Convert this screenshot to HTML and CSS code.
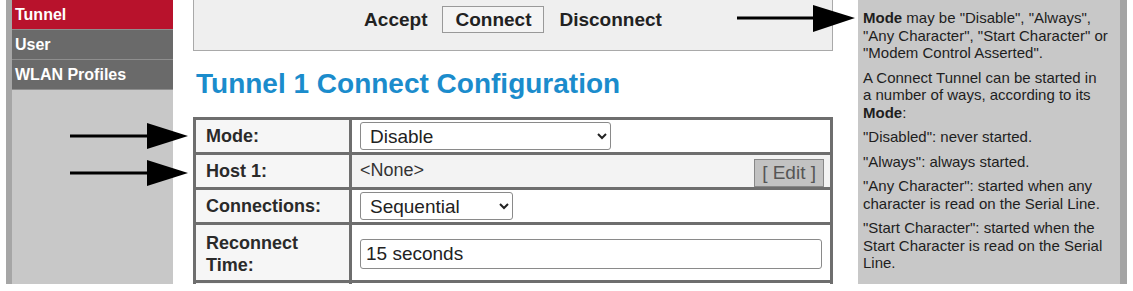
FILE: index.html
```html
<!DOCTYPE html>
<html lang="en">
<head>
  <meta charset="UTF-8">
  <title>Tunnel 1 Connect Configuration</title>
  <link rel="stylesheet" href="styles.css">
</head>
<body>
  <div class="page">
    <!-- Left menu -->
    <nav class="sidebar">
      <a class="menu-item active" href="#">Tunnel</a>
      <a class="menu-item" href="#">User</a>
      <a class="menu-item" href="#">WLAN Profiles</a>
    </nav>

    <!-- Main content -->
    <main class="main">
      <div class="actions">
        <span class="action">Accept</span>
        <span class="action current">Connect</span>
        <span class="action">Disconnect</span>
      </div>

      <h1 class="title">Tunnel 1 Connect Configuration</h1>

      <table class="config">
        <tr>
          <td class="label">Mode:</td>
          <td class="value">
            <select class="mode-select">
              <option>Disable</option>
              <option>Always</option>
              <option>Any Character</option>
              <option>Start Character</option>
              <option>Modem Control Asserted</option>
            </select>
          </td>
        </tr>
        <tr class="host-row">
          <td class="label">Host 1:</td>
          <td class="value">
            <div class="host">
              <span class="host-name">&lt;None&gt;</span>
              <button class="edit-btn" type="button">[ Edit ]</button>
            </div>
          </td>
        </tr>
        <tr>
          <td class="label">Connections:</td>
          <td class="value">
            <select class="conn-select">
              <option>Sequential</option>
              <option>Simultaneous</option>
            </select>
          </td>
        </tr>
        <tr class="tall-row">
          <td class="label">Reconnect<br>Time:</td>
          <td class="value">
            <input class="text-input" type="text" value="15 seconds">
          </td>
        </tr>
        <tr>
          <td class="label">&nbsp;</td>
          <td class="value">&nbsp;</td>
        </tr>
      </table>
    </main>

    <!-- Help panel -->
    <aside class="help">
      <p><b>Mode</b> may be "Disable", "Always", "Any Character", "Start Character" or "Modem Control Asserted".</p>
      <p>A Connect Tunnel can be started in<br>a number of ways, according to its <b>Mode</b>:</p>
      <p>"Disabled": never started.</p>
      <p>"Always": always started.</p>
      <p>"Any Character": started when any character is read on the Serial Line.</p>
      <p>"Start Character": started when the Start Character is read on the Serial Line.</p>
    </aside>

    <!-- Callout arrows over the screenshot -->
    <svg class="arrow arrow-top" width="120" height="32" viewBox="0 0 120 32">
      <line x1="0" y1="15" x2="78" y2="15" stroke="#000" stroke-width="3"/>
      <polygon points="76,2 118,15 76,29" fill="#000"/>
    </svg>
    <svg class="arrow arrow-mode" width="120" height="28" viewBox="0 0 120 28">
      <line x1="0" y1="13" x2="80" y2="13" stroke="#000" stroke-width="3"/>
      <polygon points="77,0 118,13 77,26" fill="#000"/>
    </svg>
    <svg class="arrow arrow-host" width="120" height="28" viewBox="0 0 120 28">
      <line x1="0" y1="13" x2="80" y2="13" stroke="#000" stroke-width="3"/>
      <polygon points="77,0 118,13 77,26" fill="#000"/>
    </svg>
  </div>
</body>
</html>
```

FILE: styles.css
```css
/* General Styles */
body {
  margin: 0;
  padding: 0;
  background: #fff;
  font-family: "Liberation Sans", Arial, sans-serif;
  color: #222;
}

.page {
  position: relative;
  display: flex;
  align-items: flex-start;
  height: 284px;
  overflow: hidden;
  padding-left: 6px;
}

/* Left menu */
.sidebar {
  width: 161px;
  height: 284px;
  background: #c8c8c8;
  border-left: 6px solid #a6a6a6;
  display: flex;
  flex-direction: column;
  flex-shrink: 0;
}

.menu-item {
  display: block;
  height: 29px;
  line-height: 29px;
  padding-left: 3px;
  background: #6a6a6a;
  color: #fff;
  font-weight: bold;
  font-size: 16px;
  text-decoration: none;
  border-bottom: 1px solid #8e8e8e;
}

.menu-item.active {
  background: #b8122c;
}

/* Main column */
.main {
  width: 640px;
  margin-left: 20px;
  flex-shrink: 0;
}

.actions {
  height: 51px;
  background: #efefef;
  border: 1px solid #a9a9a9;
  border-top: none;
  display: flex;
  justify-content: center;
  align-items: flex-start;
  gap: 15px;
  padding-top: 6px;
  box-sizing: border-box;
}

.action {
  font-weight: bold;
  font-size: 19px;
  color: #222;
  line-height: 27px;
}

.action.current {
  border: 1px solid #999;
  background: #f4f4f4;
  padding: 0 12px;
  line-height: 25px;
}

.title {
  margin: 17px 0 17px 3px;
  font-size: 28px;
  line-height: 32px;
  color: #1b8ccc;
  font-weight: bold;
}

/* Config table */
.config {
  width: 640px;
  border-collapse: collapse;
  border: 3px solid #6e6e6e;
}

.config td {
  border: 3px solid #6e6e6e;
  padding: 0 8px;
  height: 32px;
}

.label {
  width: 136px;
  font-size: 18px;
  font-weight: bold;
  background: #f6f6f6;
  color: #2a2a2a;
  line-height: 22px;
  padding-left: 10px !important;
}

.value {
  background: #fff;
  font-size: 19px;
}

.host-row .value {
  background: #f3f3f3;
  padding-right: 6px;
}

.tall-row td {
  height: 53px;
  padding-top: 2px;
}

select,
.text-input {
  font-family: "Liberation Sans", Arial, sans-serif;
  font-size: 19px;
  color: #222;
  border: 1px solid #8a8a8a;
  border-radius: 3px;
  background: #fff;
  box-sizing: border-box;
  height: 28px;
  padding: 0 5px;
}

.mode-select {
  width: 251px;
}

.conn-select {
  width: 153px;
}

.text-input {
  width: 462px;
  height: 30px;
}

.host {
  display: flex;
  justify-content: space-between;
  align-items: center;
}

.host-name {
  font-size: 18px;
  color: #333;
  margin-top: -2px;
}

.edit-btn {
  font-family: "Liberation Sans", Arial, sans-serif;
  font-size: 19px;
  color: #555;
  background: #c2c2c2;
  border: 1px solid #888;
  height: 28px;
  padding: 0 7px;
  margin-top: 4px;
}

/* Help panel */
.help {
  width: 257px;
  height: 284px;
  margin-left: 25px;
  background: #c8c8c8;
  border-right: 7px solid #a4a4a4;
  padding: 9px 0 0 5px;
  box-sizing: content-box;
  font-size: 15px;
  line-height: 17.5px;
  color: #1e1e1e;
  flex-shrink: 0;
}

.help p {
  margin: 0 0 7px;
}

/* Callout arrows */
.arrow {
  position: absolute;
}

.arrow-top {
  left: 737px;
  top: 3px;
}

.arrow-mode {
  left: 70px;
  top: 123px;
}

.arrow-host {
  left: 70px;
  top: 160px;
}
```
